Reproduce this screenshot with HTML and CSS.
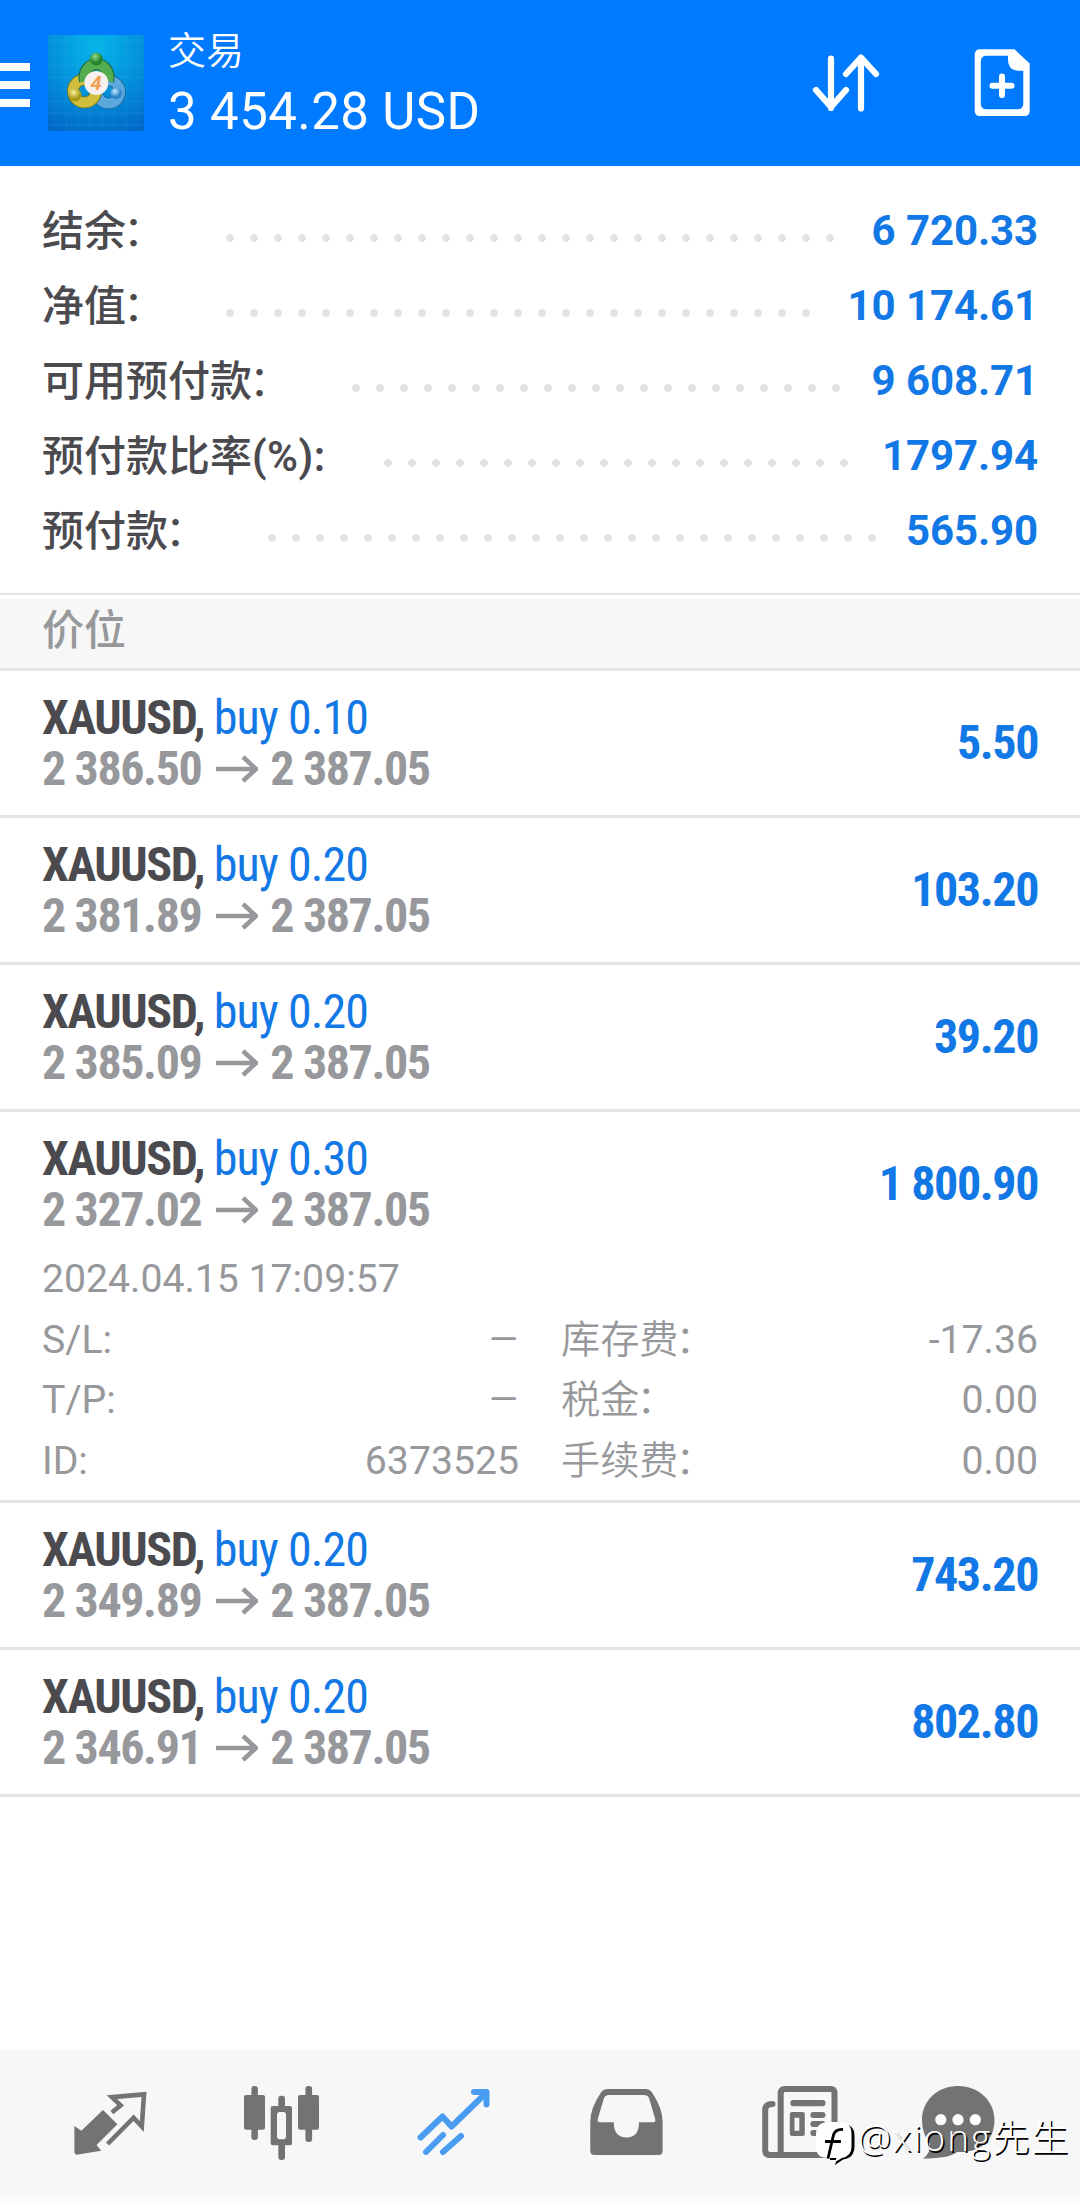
FILE: index.html
```html
<!DOCTYPE html>
<html lang="zh-CN">
<head>
    <meta charset="UTF-8">
    <meta name="viewport" content="width=device-width, initial-scale=1.0">
    <title>交易</title>
    <link rel="stylesheet" href="styles.css">
</head>
<body>
    <div class="header">
        <div class="menu">
            <span></span>
            <span></span>
            <span></span>
        </div>
        <svg class="logo" viewBox="0 0 96 96">
            <defs>
                <radialGradient id="sky" cx="50%" cy="12%" r="95%">
                    <stop offset="0" stop-color="#05b6ea"/>
                    <stop offset="0.5" stop-color="#0292db"/>
                    <stop offset="1" stop-color="#0069c8"/>
                </radialGradient>
                <pattern id="grid" width="12" height="12" patternUnits="userSpaceOnUse">
                    <path d="M0 6H12M6 0V12" stroke="#5cc8f5" stroke-opacity="0.12" fill="none"/>
                </pattern>
                <radialGradient id="green" cx="40%" cy="30%"><stop offset="0" stop-color="#8fdc86"/><stop offset="1" stop-color="#23822f"/></radialGradient>
                <radialGradient id="yellow" cx="40%" cy="30%"><stop offset="0" stop-color="#fff3a0"/><stop offset="1" stop-color="#a89a18"/></radialGradient>
                <radialGradient id="blue" cx="40%" cy="30%"><stop offset="0" stop-color="#bfe8ff"/><stop offset="1" stop-color="#2d83c8"/></radialGradient>
            </defs>
            <rect width="96" height="96" fill="url(#sky)"/>
            <rect width="96" height="96" fill="url(#grid)"/>
            <g fill="none">
                <circle cx="60.500" cy="57" r="11.500" stroke="#17659f" stroke-width="12"/>
                <circle cx="60.500" cy="57" r="11.500" stroke="#5aa8dc" stroke-width="10"/>
                <circle cx="36.500" cy="56" r="11.500" stroke="#6f7a1c" stroke-width="12"/>
                <circle cx="36.500" cy="56" r="11.500" stroke="#d0bf3c" stroke-width="10"/>
                <path d="M37 46A12 13 0 1 1 60 46" stroke="#1b6a38" stroke-width="12"/>
                <path d="M37 46A12 13 0 1 1 60 46" stroke="#55ad52" stroke-width="10"/>
            </g>
            <circle cx="48.300" cy="24" r="6.500" fill="url(#green)"/>
            <circle cx="27" cy="60" r="6.500" fill="url(#yellow)"/>
            <circle cx="68" cy="58.500" r="5.800" fill="url(#blue)"/>
            <circle cx="48.300" cy="48" r="12" fill="#f6f1ee"/>
            <text class="logo-num" x="48" y="55" text-anchor="middle">4</text>
        </svg>
        <div class="account">
            <div class="account-title">交易</div>
            <div class="account-sum">3 454.28 USD</div>
        </div>
        <svg class="sort-icon" viewBox="812 52 68 62">
            <path d="M831 59.500V109M816 91L831 108L846 91M861 109.500V59M846 75L861 58.500L876 75"/>
        </svg>
        <svg class="add-icon" viewBox="974 49 56 68">
            <path fill-rule="evenodd" d="M980 49.300H1014.500L1029.700 63.500V110.500Q1029.700 116 1024.500 116H980Q974.700 116 974.700 110.500V55Q974.700 49.300 980 49.300ZM986.500 55.700Q980.800 55.700 980.800 61.500V103.500Q980.800 109.300 986.500 109.300H1017.500Q1023.300 109.300 1023.300 103.500V70.700H1018Q1008 70 1008 60V55.700Z"/>
            <path class="plus" d="M1002 76.500V95M992.500 85.700H1011.500"/>
        </svg>
    </div>

    <div class="summary">
        <div class="sum-row"><span>结余<i class="colon">：</i></span><i class="dots"></i><b>6 720.33</b></div>
        <div class="sum-row"><span>净值<i class="colon">：</i></span><i class="dots"></i><b>10 174.61</b></div>
        <div class="sum-row"><span>可用预付款<i class="colon">：</i></span><i class="dots"></i><b>9 608.71</b></div>
        <div class="sum-row"><span>预付款比率<em>(%):</em></span><i class="dots"></i><b>1797.94</b></div>
        <div class="sum-row"><span>预付款<i class="colon">：</i></span><i class="dots"></i><b>565.90</b></div>
    </div>

    <div class="section">价位</div>

    <div class="position">
        <div class="pos-head">
            <div>
                <div class="symbol">XAUUSD, <span>buy 0.10</span></div>
                <div class="prices">2 386.50<svg class="arrow" viewBox="0 0 42 28"><path d="M0 14H40M27 2L40 14L27 26"/></svg>2 387.05</div>
            </div>
            <div class="profit">5.50</div>
        </div>
    </div>
    <div class="position">
        <div class="pos-head">
            <div>
                <div class="symbol">XAUUSD, <span>buy 0.20</span></div>
                <div class="prices">2 381.89<svg class="arrow" viewBox="0 0 42 28"><path d="M0 14H40M27 2L40 14L27 26"/></svg>2 387.05</div>
            </div>
            <div class="profit">103.20</div>
        </div>
    </div>
    <div class="position">
        <div class="pos-head">
            <div>
                <div class="symbol">XAUUSD, <span>buy 0.20</span></div>
                <div class="prices">2 385.09<svg class="arrow" viewBox="0 0 42 28"><path d="M0 14H40M27 2L40 14L27 26"/></svg>2 387.05</div>
            </div>
            <div class="profit">39.20</div>
        </div>
    </div>
    <div class="position">
        <div class="pos-head">
            <div>
                <div class="symbol">XAUUSD, <span>buy 0.30</span></div>
                <div class="prices">2 327.02<svg class="arrow" viewBox="0 0 42 28"><path d="M0 14H40M27 2L40 14L27 26"/></svg>2 387.05</div>
            </div>
            <div class="profit">1 800.90</div>
        </div>
        <div class="details">
            <div class="date">2024.04.15 17:09:57</div>
            <div class="cell"><span>S/L:</span><span class="dash">—</span></div>
            <div class="cell"><span class="cn">库存费<i class="colon">：</i></span><span>-17.36</span></div>
            <div class="cell"><span>T/P:</span><span class="dash">—</span></div>
            <div class="cell"><span class="cn">税金<i class="colon">：</i></span><span>0.00</span></div>
            <div class="cell"><span>ID:</span><span>6373525</span></div>
            <div class="cell"><span class="cn">手续费<i class="colon">：</i></span><span>0.00</span></div>
        </div>
    </div>
    <div class="position">
        <div class="pos-head">
            <div>
                <div class="symbol">XAUUSD, <span>buy 0.20</span></div>
                <div class="prices">2 349.89<svg class="arrow" viewBox="0 0 42 28"><path d="M0 14H40M27 2L40 14L27 26"/></svg>2 387.05</div>
            </div>
            <div class="profit">743.20</div>
        </div>
    </div>
    <div class="position">
        <div class="pos-head">
            <div>
                <div class="symbol">XAUUSD, <span>buy 0.20</span></div>
                <div class="prices">2 346.91<svg class="arrow" viewBox="0 0 42 28"><path d="M0 14H40M27 2L40 14L27 26"/></svg>2 387.05</div>
            </div>
            <div class="profit">802.80</div>
        </div>
    </div>

    <div class="tabs">
        <!-- quotes -->
        <svg viewBox="66 30 88 88">
            <path d="M74.400 76L81.300 80.700L103 60L117.400 74.300L96.600 95L101.200 100.700L76.500 104.800L74.400 103Z"/>
            <path class="line thin" d="M111.900 62.500L120.600 55.300L112 47.200L144 44.400L141.800 76.500L133.600 67.700L107.600 94"/>
        </svg>
        <!-- charts -->
        <svg viewBox="238 30 88 88">
            <rect x="244" y="45" width="21" height="34.700" rx="2"/>
            <rect x="251.400" y="36" width="6.500" height="54" rx="3"/>
            <rect x="298" y="45" width="21" height="34.700" rx="2"/>
            <rect x="305.400" y="36" width="6.700" height="56" rx="3"/>
            <rect x="278.300" y="45.700" width="6.700" height="12" rx="3"/>
            <rect x="278.300" y="92" width="6.700" height="18" rx="3"/>
            <path fill-rule="evenodd" d="M272.700 56H290Q292 56 292 58V93.300Q292 95.300 290 95.300H272.700Q270.700 95.300 270.700 93.300V58Q270.700 56 272.700 56ZM279.500 62Q277 62 277 65V86Q277 89.300 279.500 89.300H283.500Q286 89.300 286 86V65Q286 62 283.500 62Z"/>
        </svg>
        <!-- trade, current tab -->
        <svg class="active" viewBox="410 30 88 88">
            <path class="line" d="M420.500 87.500L442.500 66.500L451.500 76.500L485 44M474 42H486.500V54.500M426 102L443 85M443 102L461 86"/>
            <path d="M476 41H488V54Z"/>
        </svg>
        <!-- history -->
        <svg viewBox="582 30 88 88">
            <path fill-rule="evenodd" d="M608 39H645.500Q650 39 652 42.500Q662.600 58 662.600 72V101Q662.600 105 658.500 105H594.500Q590.300 105 590.300 101V72Q590.300 58 601 42.500Q603 39 608 39ZM609 45Q605.500 45 604 48L597.800 69Q597 72.300 600 72.300H613.800Q613.800 87.500 626.500 87.500Q639 87.500 639 72.300H653Q656 72.300 655.200 69L649 48Q647.500 45 644 45Z"/>
        </svg>
        <!-- news -->
        <svg viewBox="754 30 88 88">
            <path class="line" d="M780.700 44Q780.700 39 785 39H830.500Q834.500 39 834.500 43V100.500Q834.500 105 830.500 105H770Q765.200 105 765.200 100V60Q765.200 54 772.500 54M780.700 42V105"/>
            <rect x="790.300" y="50" width="35.200" height="6.200" rx="3"/>
            <path fill-rule="evenodd" d="M792 62H802.800Q804.800 62 804.800 64V84Q804.800 86 802.800 86H792Q789.800 86 789.800 84V64Q789.800 62 792 62ZM794.500 67.700V80.700H799.300V67.700Z"/>
            <rect x="810.300" y="62" width="15.200" height="6" rx="3"/>
            <rect x="810.300" y="71" width="15.200" height="6" rx="3"/>
            <rect x="810.300" y="80" width="15.200" height="6" rx="3"/>
        </svg>
        <!-- chat -->
        <svg viewBox="912 30 88 88">
            <path d="M958 36C979 36 994.500 51 994.500 70C994.500 91 979 103.500 957 102Q950 108.500 923 108.500Q931 103 930 93.500Q922 84 922 70C922 51 937 36 958 36Z"/>
            <g fill="#fff">
                <circle cx="940.800" cy="69.700" r="5.600"/>
                <circle cx="958" cy="69.700" r="5.600"/>
                <circle cx="975.300" cy="69.700" r="5.600"/>
            </g>
        </svg>
    </div>

    <div class="watermark">
        <svg viewBox="0 0 40 44">
            <path fill="#000" d="M14 2H26Q38.500 2 38.500 14V24Q38.500 36 27 37.500L19 43L20.500 38H14Z"/>
            <path fill="#fff" d="M13 0H24Q35.500 0 35.500 12V25Q35.500 34 26 36L19 40L20.500 36H12Q0 36 0 25V12Q0 0 13 0Z"/>
            <path d="M12 36.500L17.500 13Q19.500 7 27 7.500M9 19.500H25" fill="none" stroke="#000" stroke-width="2.800"/>
        </svg>
        <span>@xiong先生</span>
    </div>
</body>
</html>
```
FILE: styles.css
```css
body {
    margin: 0;
    height: 2203px;
    display: flex;
    flex-direction: column;
    position: relative;
    overflow: hidden;
    background: #fff;
    font-family: Roboto, "Noto Sans CJK SC", sans-serif;
    color: #4a4a4f;
}

/* header */
.header {
    height: 166px;
    display: flex;
    background: #007aff;
    color: #fff;
}
.menu {
    width: 30px;
    margin: 63px 18px 0 0;
    display: flex;
    flex-direction: column;
    gap: 10px;
}
.menu span {
    height: 8px;
    background: #fff;
}
.logo {
    width: 96px;
    height: 96px;
    margin-top: 35px;
}
.logo-num {
    font-size: 20px;
    font-weight: 700;
    font-style: italic;
    fill: #f0a050;
}
.account {
    flex: 1;
    padding: 25px 0 0 24px;
}
.account-title {
    font-size: 38px;
    font-weight: 350;
    line-height: 52px;
    margin-bottom: 3px;
}
.account-sum {
    font-size: 51px;
    line-height: 64px;
    letter-spacing: 0.4px;
}
.sort-icon {
    width: 68px;
    height: 62px;
    margin: 51px 94px 0 0;
    fill: none;
    stroke: #fff;
    stroke-width: 6.2;
    stroke-linecap: round;
    stroke-linejoin: round;
}
.add-icon {
    width: 56px;
    height: 68px;
    margin: 49px 50px 0 0;
    fill: #fff;
}
.plus {
    stroke: #fff;
    stroke-width: 6;
    stroke-linecap: round;
}

/* account summary */
.summary {
    padding: 27px 42px 25px;
    border-bottom: 2px solid #e2e2e2;
}
.sum-row {
    display: flex;
    height: 75px;
    line-height: 75px;
    font-size: 42px;
    font-weight: 500;
}
.sum-row span {
    padding-top: 1px;
}
.sum-row em {
    font-style: normal;
    font-weight: 600;
    letter-spacing: 0.5px;
}
.sum-row b {
    font-weight: 700;
    letter-spacing: -0.1px;
    color: #1278e6;
}
.colon {
    margin: 0 3px 0 -3px;
    font-style: normal;
    font-weight: 400;
}
.dots {
    flex: 1;
    margin: 41px 26px 0 58px;
    height: 8px;
    background: radial-gradient(circle at 4px 4px, #e2e2e2 3.5px, transparent 4.2px) repeat-x;
    background-size: 24px 8px;
}

.section {
    margin-top: 4px;
    height: 69px;
    padding: 0 42px;
    line-height: 63px;
    font-size: 42px;
    font-weight: 450;
    color: #97989b;
    background: #f7f7f7;
    border-bottom: 3px solid #e4e4e4;
}

/* open positions */
.position {
    padding: 0 42px;
    border-bottom: 3px solid #e4e4e4;
}
.pos-head {
    height: 144px;
    display: flex;
    justify-content: space-between;
    align-items: center;
    font-size: 48px;
    font-weight: 700;
    font-stretch: 75%;
    letter-spacing: -1.4px;
}
.symbol, .prices {
    line-height: 51px;
}
.symbol span {
    font-weight: 400;
    letter-spacing: -0.9px;
    color: #1278e6;
}
.prices {
    display: flex;
    color: #97989b;
}
.arrow {
    width: 42px;
    height: 28px;
    margin: 12px 12px 0 15px;
    fill: none;
    stroke: #97989b;
    stroke-width: 4.5;
}
.profit {
    margin-bottom: 2px;
    color: #1278e6;
}
.details {
    display: grid;
    grid-template-columns: 1fr 1fr;
    column-gap: 42px;
    margin-top: -7px;
    padding-bottom: 9px;
    font-size: 39.2px;
    font-weight: 380;
    line-height: 60.5px;
    color: #97989b;
}
.date {
    grid-column: 1 / 3;
}
.cell {
    display: flex;
    justify-content: space-between;
}
.cn, .cn .colon {
    font-weight: 330;
}
.dash {
    margin-right: 1px;
    font-size: 37px;
}

/* bottom tabs */
.tabs {
    height: 147px;
    margin-top: auto;
    padding-left: 66px;
    display: flex;
    gap: 84px;
    background: #f7f7f7;
    border-bottom: 6px solid #fcfcfc;
    fill: #737373;
}
.tabs svg {
    width: 88px;
    height: 88px;
    margin-top: 30px;
}
.tabs svg:last-child {
    margin-left: -14px;
}
.tabs .line {
    fill: none;
    stroke: #737373;
    stroke-width: 6;
    stroke-linecap: round;
    stroke-linejoin: round;
}
.tabs .thin {
    stroke-width: 4.6;
    stroke-linecap: butt;
    stroke-linejoin: miter;
}
.tabs .active {
    fill: #4a9cf0;
}
.active .line {
    stroke: #4a9cf0;
}

.watermark {
    position: absolute;
    left: 816px;
    bottom: 37px;
    display: flex;
    align-items: flex-start;
    gap: 2px;
    font-family: "Open Sans", "Noto Sans CJK SC", sans-serif;
    font-size: 37px;
    font-weight: 300;
    line-height: 29px;
    letter-spacing: 2px;
    color: #fff;
    text-shadow: 1.5px 1.5px 0 #000;
    white-space: nowrap;
}
.watermark svg {
    width: 40px;
    height: 44px;
}
```
